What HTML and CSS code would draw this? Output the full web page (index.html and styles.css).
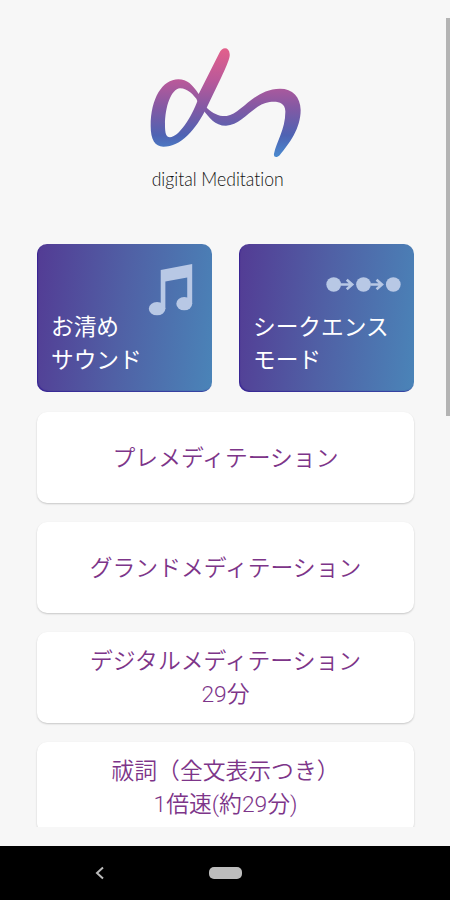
FILE: index.html
```html
<!DOCTYPE html>
<html lang="ja">
<head>
<meta charset="utf-8">
<title>digital Meditation</title>
<link rel="stylesheet" href="styles.css">
</head>
<body>
<div class="screen">
  <main class="content">
    <header class="brand">
      <svg class="logo" viewBox="0 0 570 510" role="img" aria-label="digital Meditation">
        <defs>
          <linearGradient id="ink" gradientUnits="userSpaceOnUse" x1="0" y1="54" x2="0" y2="382">
            <stop offset="0" stop-color="#e3608b"/>
            <stop offset=".3" stop-color="#b9599a"/>
            <stop offset=".55" stop-color="#8259a4"/>
            <stop offset=".8" stop-color="#4e63b3"/>
            <stop offset="1" stop-color="#4a8bd0"/>
          </linearGradient>
        </defs>
        <path fill="url(#ink)" fill-rule="evenodd" d="M268 69C276 49 298 50 299 72C301 85 288 115 230 233C197 299 153 350 100 350C75 350 62 329 62 288C62 206 97 148 145 148C172 148 187 164 206 192ZM150 175C124 177 105 229 105 286C105 309 108 322 120 322C145 322 185 263 203 211C190 195 174 175 150 175Z"/>
        <path fill="url(#ink)" d="M204 192L230 233C250 252 270 260 290 258C335 252 371 177 450 176C488 176 511 200 512 240C512 296 478 340 449 376C440 385 430 382 432 371C439 335 467 297 466 243C465 217 442 213 419 216C370 222 338 285 288 287C254 287 238 262 219 239L200 209Z"/>
        <text class="wordmark" x="65" y="468" textLength="396" lengthAdjust="spacingAndGlyphs">digital Meditation</text>
      </svg>
    </header>
    <section class="tiles">
      <a class="tile">
        <svg class="note" viewBox="0 0 135 160">
          <path d="M38 21L133 3V124H118V44L52 56V139H38Z"/>
          <ellipse cx="27" cy="138" rx="25" ry="20"/>
          <ellipse cx="109" cy="123" rx="24" ry="20"/>
        </svg>
        <span class="tile-label">お清め<br>サウンド</span>
      </a>
      <a class="tile">
        <svg class="steps" viewBox="0 0 224 50">
          <circle cx="23" cy="25" r="22"/><circle cx="112" cy="25" r="22"/><circle cx="201" cy="25" r="22"/>
          <path class="arrow" d="M44 25H78M62 11L78 25L62 39M133 25H167M151 11L167 25L151 39"/>
        </svg>
        <span class="tile-label">シークエンス<br>モード</span>
      </a>
    </section>
    <section class="list">
      <a class="card">プレメディテーション</a>
      <a class="card">グランドメディテーション</a>
      <a class="card">デジタルメディテーション<br>29分</a>
      <a class="card">祓詞（全文表示つき）<br>1倍速(約29分)</a>
    </section>
  </main>
  <div class="scrollbar"></div>
  <nav class="navbar">
    <svg class="back" viewBox="0 0 10 14"><path d="M8 1.5L2 7L8 12.5"/></svg>
    <span class="home"></span>
  </nav>
</div>
</body>
</html>
```
FILE: styles.css
```css
* { box-sizing: border-box; }
body {
  margin: 0;
  background: #f7f7f7;
  font-family: Roboto, "Noto Sans CJK JP", sans-serif;
}
.screen {
  position: relative;
  display: flex;
  flex-direction: column;
  height: 900px;
  overflow: hidden;
}
.content {
  height: 827px;
  padding: 30px 36px 0 37px;
  overflow: hidden;
}
.brand { height: 214px; padding-left: 93px; }
.logo { display: block; width: 190px; height: 170px; }
.wordmark {
  font-family: Lato, sans-serif;
  font-size: 61px;
  font-weight: 300;
  font-variant-ligatures: none;
  fill: #111;
}
.tiles {
  display: grid;
  grid-template-columns: 1fr 1fr;
  column-gap: 27px;
}
.tile {
  display: flex;
  flex-direction: column;
  height: 148px;
  padding: 19px 14px 15px;
  border-radius: 10px;
  background: linear-gradient(97deg, #533b94, #5060a5 48%, #4a84b8);
  box-shadow: inset 1px -1px 1px #27109299;
  color: #fff;
}
.note, .steps {
  flex: none;
  align-self: flex-end;
  fill: #b8c8e5;
}
.note { width: 45px; height: 53px; margin-right: 5px; }
.steps { width: 75px; height: 17px; margin: 13px -1px 0 0; }
.arrow { fill: none; stroke: #b8c8e5; stroke-width: 8; }
.tile-label {
  margin-top: auto;
  height: 66px;
  font-size: 22.7px;
  line-height: 33px;
  white-space: nowrap;
}
.note + .tile-label { margin-top: -5px; }
.list {
  display: flex;
  flex-direction: column;
  gap: 19px;
  margin-top: 20px;
}
.card {
  display: flex;
  flex-direction: column;
  justify-content: center;
  flex: none;
  height: 91px;
  padding-top: 1px;
  border-radius: 10px;
  background: #fff;
  box-shadow: 0 1px 2px #0003;
  color: #7d3589;
  font-size: 22.8px;
  font-weight: 350;
  line-height: 33px;
  text-align: center;
}
.scrollbar {
  position: absolute;
  top: 18px;
  right: 0;
  width: 4px;
  height: 398px;
  background: #b4b4b4;
}
.navbar {
  display: flex;
  align-items: center;
  height: 54px;
  margin-top: auto;
  padding-left: 95px;
  background: #000;
}
.back { width: 10px; height: 14px; fill: none; stroke: #bbb; stroke-width: 2; }
.home { width: 33px; height: 12px; margin-left: 104px; border-radius: 5px; background: #bdbdbd; }
```
